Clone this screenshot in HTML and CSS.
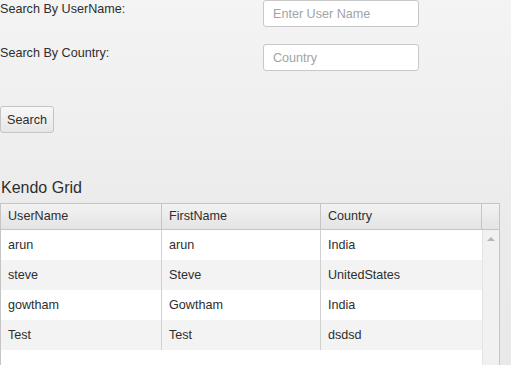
FILE: index.html
```html
<!DOCTYPE html>
<html>
<head>
<meta charset="utf-8">
<link rel="stylesheet" href="styles.css">
</head>
<body>
<div class="form-row">
  <label class="lbl">Search By UserName:</label>
  <input class="txt" type="text" placeholder="Enter User Name">
</div>
<div class="form-row row2">
  <label class="lbl">Search By Country:</label>
  <input class="txt" type="text" placeholder="Country">
</div>
<button class="btn">Search</button>
<h3 class="title">Kendo Grid</h3>
<div class="grid">
  <div class="grid-header">
    <div class="cols">
      <div class="hcell">UserName</div>
      <div class="hcell">FirstName</div>
      <div class="hcell">Country</div>
    </div>
    <div class="hscroll"></div>
  </div>
  <div class="grid-body">
    <div class="rows">
      <div class="row"><div class="cell">arun</div><div class="cell">arun</div><div class="cell">India</div></div>
      <div class="row alt"><div class="cell">steve</div><div class="cell">Steve</div><div class="cell">UnitedStates</div></div>
      <div class="row"><div class="cell">gowtham</div><div class="cell">Gowtham</div><div class="cell">India</div></div>
      <div class="row alt"><div class="cell">Test</div><div class="cell">Test</div><div class="cell">dsdsd</div></div>
    </div>
    <div class="scrollbar"><span class="arrow"></span></div>
  </div>
</div>
</body>
</html>
```

FILE: styles.css
```css
html, body {
  margin: 0;
  padding: 0;
}
body {
  font-family: "Liberation Sans", Arial, sans-serif;
  font-size: 12.6px;
  color: #2e2e2e;
  background: linear-gradient(#f4f4f4, #ebebeb 60%, #e9e9e9);
  height: 365px;
  overflow: hidden;
}
.form-row {
  display: flex;
  align-items: flex-start;
  height: 26px;
}
.row2 {
  margin-top: 18px;
}
.lbl {
  width: 263px;
  padding-top: 2px;
  line-height: 14px;
}
.txt {
  box-sizing: border-box;
  width: 156px;
  height: 27px;
  margin: 0;
  border: 1px solid #c8c8c8;
  border-radius: 3px;
  background: #fff;
  padding: 0 9px;
  font-family: "Liberation Sans", Arial, sans-serif;
  font-size: 12.6px;
  color: #333;
}
.txt::placeholder {
  color: #a3a3a3;
}
.btn {
  display: block;
  margin: 36px 0 0 0;
  box-sizing: border-box;
  width: 54px;
  height: 27px;
  padding: 0;
  border: 1px solid #c5c5c5;
  border-radius: 3px;
  background: linear-gradient(#f8f8f8, #e6e6e6);
  font-family: "Liberation Sans", Arial, sans-serif;
  font-size: 12.6px;
  color: #2e2e2e;
}
.title {
  margin: 45px 0 0 1px;
  font-size: 16px;
  font-weight: normal;
  line-height: 19px;
  height: 25px;
  color: #2e2e2e;
}
.grid {
  box-sizing: border-box;
  width: 500px;
  height: 190px;
  border: 1px solid #c5c5c5;
  background: #fff;
  display: flex;
  flex-direction: column;
}
.grid-header {
  display: flex;
  height: 25px;
  border-bottom: 1px solid #c5c5c5;
  background: linear-gradient(#f2f2f2, #e4e4e4);
}
.cols {
  flex: 1;
  display: grid;
  grid-template-columns: 160px 159px 161px;
}
.hcell {
  padding: 0 7px;
  line-height: 25px;
  border-left: 1px solid #c5c5c5;
}
.hcell:first-child {
  border-left: none;
}
.hscroll {
  width: 17px;
  border-left: 1px solid #c5c5c5;
}
.grid-body {
  flex: 1;
  display: flex;
}
.rows {
  flex: 1;
}
.row {
  display: grid;
  grid-template-columns: 160px 159px 161px;
  height: 30px;
  background: #fff;
}
.row.alt {
  background: #f3f3f3;
}
.cell {
  padding: 0 7px;
  line-height: 30px;
  border-left: 1px solid #d0d0d0;
}
.cell:first-child {
  border-left: none;
}
.scrollbar {
  width: 17px;
  background: #f1f1f1;
  border-left: 1px solid #e4e4e4;
  display: flex;
  justify-content: center;
  padding-top: 7px;
  box-sizing: border-box;
}
.arrow {
  width: 0;
  height: 0;
  border-left: 4px solid transparent;
  border-right: 4px solid transparent;
  border-bottom: 4px solid #b5b5b5;
}
```
